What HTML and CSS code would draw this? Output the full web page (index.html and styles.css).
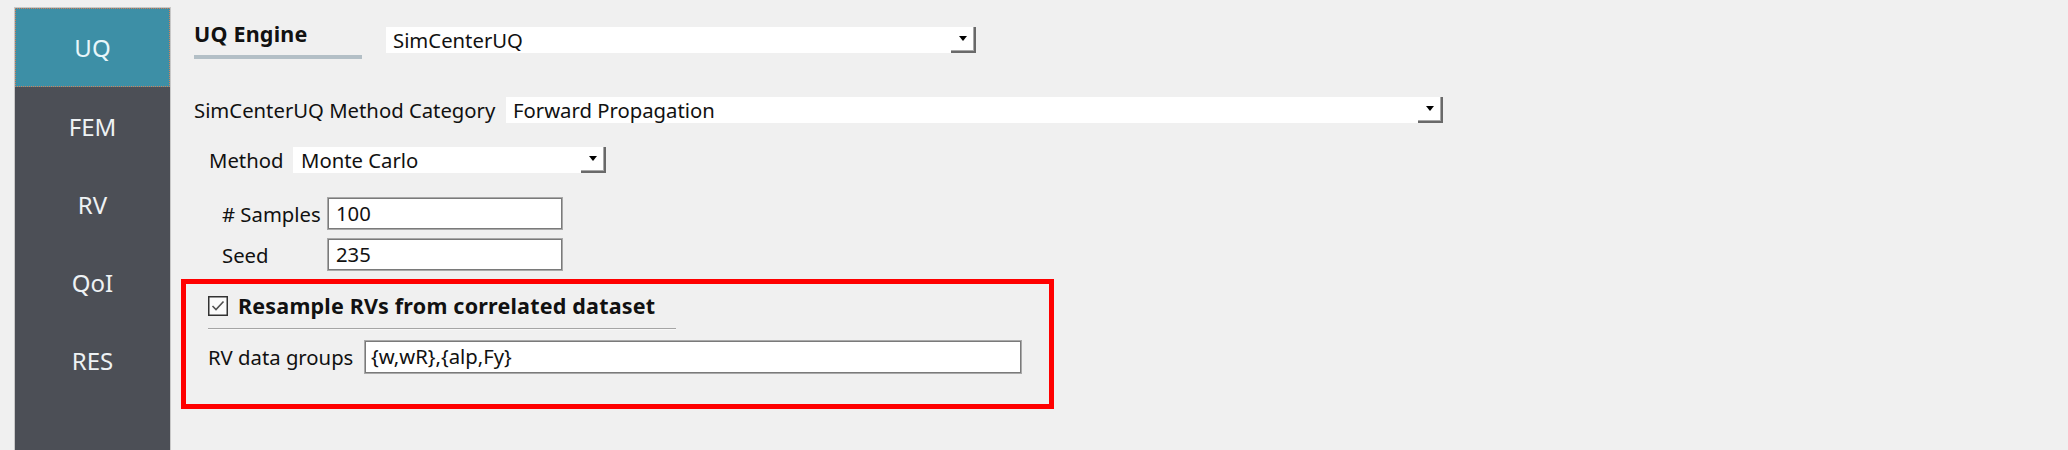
FILE: index.html
```html
<!DOCTYPE html>
<html>
<head>
<meta charset="utf-8">
<link rel="stylesheet" href="styles.css">
<title>UQ</title>
</head>
<body>
<div class="app">
  <nav class="sidebar">
    <div class="tab active">UQ</div>
    <div class="tab">FEM</div>
    <div class="tab">RV</div>
    <div class="tab">QoI</div>
    <div class="tab">RES</div>
  </nav>
  <main class="main">
    <div class="engine-row">
      <div class="engine-title">
        <div class="engine-text">UQ Engine</div>
        <div class="engine-bar"></div>
      </div>
      <div class="combo combo-engine"><span class="combo-text">SimCenterUQ</span><span class="drop"><span class="arrow"></span></span></div>
    </div>

    <div class="row row-category">
      <span class="label label-category">SimCenterUQ Method Category</span>
      <div class="combo combo-category"><span class="combo-text">Forward Propagation</span><span class="drop"><span class="arrow"></span></span></div>
    </div>

    <div class="row row-method">
      <span class="label label-method">Method</span>
      <div class="combo combo-method"><span class="combo-text">Monte Carlo</span><span class="drop"><span class="arrow"></span></span></div>
    </div>

    <div class="params">
      <span class="label">#&nbsp;Samples</span>
      <div class="input input-param">100</div>
      <span class="label">Seed</span>
      <div class="input input-param">235</div>
    </div>

    <section class="group">
      <div class="check-row">
        <svg class="checkbox" width="20" height="20" viewBox="0 0 20 20">
          <rect x="0.75" y="0.75" width="18.5" height="18.5" fill="#fbfbfb" stroke="#333" stroke-width="1.5"/>
          <polyline points="4.5,10 8,13.5 15.5,5.5" fill="none" stroke="#505050" stroke-width="1.6"/>
        </svg>
        <span class="check-label">Resample RVs from correlated dataset</span>
      </div>
      <div class="separator"></div>
      <div class="row row-groups">
        <span class="label label-groups">RV data groups</span>
        <div class="input input-groups">{w,wR},{alp,Fy}</div>
      </div>
    </section>
  </main>
</div>
</body>
</html>
```

FILE: styles.css
```css
* { box-sizing: border-box; }

html, body {
  margin: 0;
  padding: 0;
  height: 100%;
  overflow: hidden;
}

body {
  background: #f0f0f0;
  font-family: "Noto Sans", "Open Sans", sans-serif;
  font-size: 20.3px;
  color: #111;
}

.app {
  display: flex;
  height: 100%;
}

.sidebar {
  margin: 7px 0 0 14px;
  width: 157px;
  flex: none;
  background: #4c4f56;
  border: 1px solid #c8c8c8;
  border-bottom: none;
  display: flex;
  flex-direction: column;
}

.tab {
  height: 78px;
  display: flex;
  align-items: center;
  justify-content: center;
  color: #eef2f4;
  font-size: 24px;
}

.tab.active {
  height: 79px;
  background: #3d8fa6;
  outline: 1px dotted #d0805a;
  outline-offset: -1px;
  color: #e8f6fa;
}

.main {
  flex: 1;
  padding: 27px 0 0 10px;
}

.engine-row {
  display: flex;
  align-items: flex-start;
  gap: 24px;
  height: 32px;
  margin-left: 13px;
}

.engine-title {
  width: 168px;
  margin-top: -6px;
}

.engine-text {
  font-weight: bold;
  font-size: 21.5px;
  letter-spacing: 0.2px;
  line-height: 26px;
  height: 26px;
  white-space: nowrap;
}

.engine-bar {
  margin-top: 8px;
  height: 4px;
  background: #b3bfc6;
}

.combo {
  display: flex;
  align-items: center;
  height: 26px;
  background: #fff;
  padding-left: 7px;
}

.combo-text {
  flex: 1;
  line-height: 26px;
  white-space: nowrap;
}

.drop {
  width: 25px;
  height: 26px;
  border-right: 2px solid #696969;
  border-bottom: 2px solid #696969;
  box-shadow: inset -1px -1px 0 #a8a8a8;
  display: flex;
  align-items: center;
  justify-content: center;
}

.arrow {
  width: 0;
  height: 0;
  border-left: 4px solid transparent;
  border-right: 4px solid transparent;
  border-top: 5px solid #000;
  margin-top: -2px;
}

.combo-engine { width: 590px; }
.combo-category { width: 937px; }
.combo-method { width: 313px; padding-left: 8px; }

.row {
  display: flex;
  align-items: center;
}

.row-category {
  margin: 38px 0 0 13px;
  gap: 11px;
}

.label-category { width: 301px; }

.row-method {
  margin: 24px 0 0 28px;
  gap: 10px;
}

.label-method { width: 74px; }

.label {
  line-height: 26px;
  white-space: nowrap;
}

.params {
  display: grid;
  grid-template-columns: 106px 234px;
  row-gap: 10px;
  align-items: center;
  margin: 25px 0 0 41px;
}

.input {
  background: #fff;
  border: 1px solid #7a7a7a;
  box-shadow: 0 0 0 1px #a9a9a9;
  line-height: 29px;
  padding-left: 7px;
  white-space: nowrap;
}

.input-param { height: 31px; }

.group {
  margin-top: 9px;
  width: 873px;
  height: 130px;
  border: 5px solid #ff0000;
  padding: 12px 0 0 22px;
}

.check-row {
  display: flex;
  align-items: center;
  gap: 10px;
  height: 20px;
}

.checkbox { flex: none; }

.check-label {
  font-weight: bold;
  font-size: 21.5px;
  letter-spacing: 0.2px;
  line-height: 26px;
  white-space: nowrap;
}

.separator {
  margin-top: 12px;
  width: 468px;
  height: 2px;
  background: #a5a5a5;
  border-bottom: 1px solid #f8f8f8;
}

.row-groups {
  margin-top: 11px;
  gap: 10px;
}

.label-groups { width: 147px; }

.input-groups {
  width: 656px;
  height: 32px;
  padding-left: 5px;
}
```
